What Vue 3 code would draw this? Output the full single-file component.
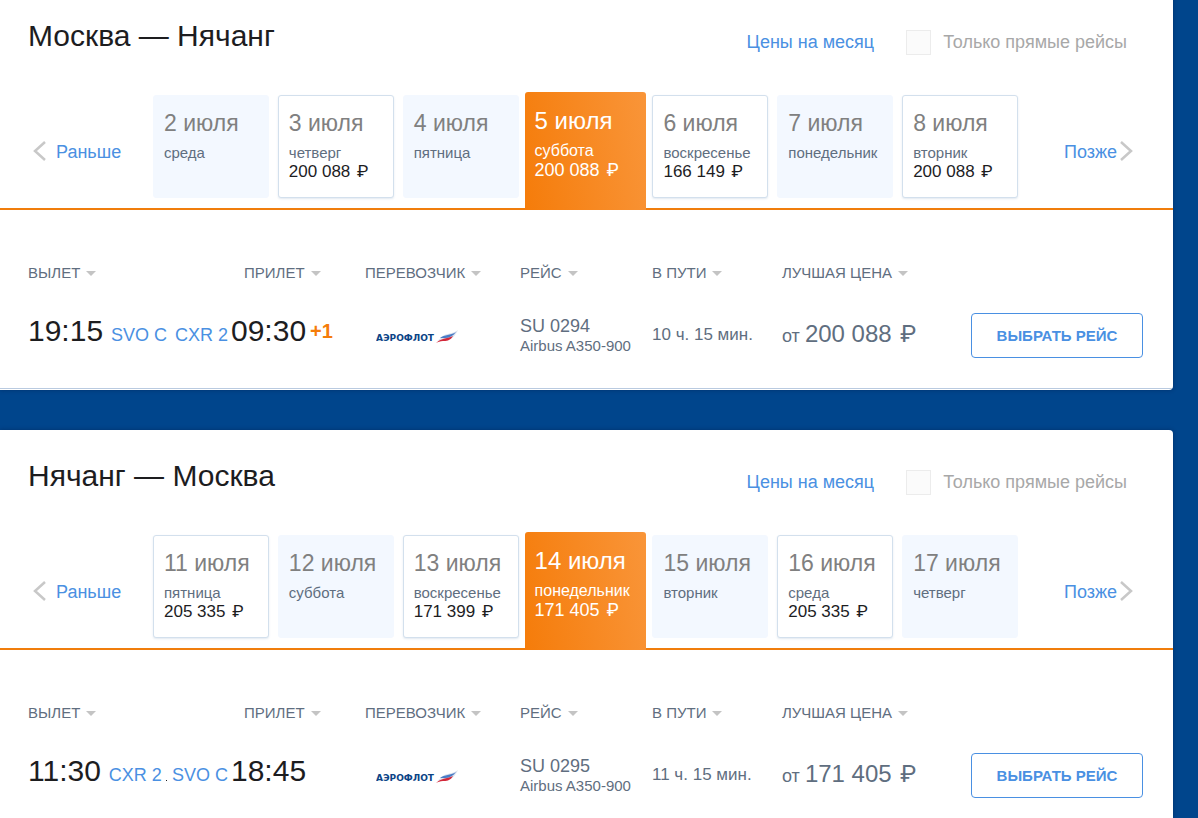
<script setup>
import { ref } from 'vue'

const columns = [
  { key: 'departure', label: 'ВЫЛЕТ' },
  { key: 'arrival', label: 'ПРИЛЕТ' },
  { key: 'carrier', label: 'ПЕРЕВОЗЧИК' },
  { key: 'flight', label: 'РЕЙС' },
  { key: 'duration', label: 'В ПУТИ' },
  { key: 'price', label: 'ЛУЧШАЯ ЦЕНА' },
]

const directions = ref([
  {
    id: 'outbound',
    title: 'Москва — Нячанг',
    directOnly: false,
    days: [
      { date: '2 июля', weekday: 'среда' },
      { date: '3 июля', weekday: 'четверг', price: '200 088' },
      { date: '4 июля', weekday: 'пятница' },
      { date: '5 июля', weekday: 'суббота', price: '200 088', active: true },
      { date: '6 июля', weekday: 'воскресенье', price: '166 149' },
      { date: '7 июля', weekday: 'понедельник' },
      { date: '8 июля', weekday: 'вторник', price: '200 088' },
    ],
    flight: {
      from: 'SVO C', departure: '19:15', to: 'CXR 2', arrival: '09:30', plusDays: '+1',
      number: 'SU 0294', aircraft: 'Airbus A350-900', duration: '10 ч. 15 мин.', price: '200 088',
    },
  },
  {
    id: 'inbound',
    title: 'Нячанг — Москва',
    directOnly: false,
    days: [
      { date: '11 июля', weekday: 'пятница', price: '205 335' },
      { date: '12 июля', weekday: 'суббота' },
      { date: '13 июля', weekday: 'воскресенье', price: '171 399' },
      { date: '14 июля', weekday: 'понедельник', price: '171 405', active: true },
      { date: '15 июля', weekday: 'вторник' },
      { date: '16 июля', weekday: 'среда', price: '205 335' },
      { date: '17 июля', weekday: 'четверг' },
    ],
    flight: {
      from: 'CXR 2', departure: '11:30', to: 'SVO C', arrival: '18:45', plusDays: '', dot: true,
      number: 'SU 0295', aircraft: 'Airbus A350-900', duration: '11 ч. 15 мин.', price: '171 405',
    },
  },
])
</script>

<template>
  <main class="page">
    <section v-for="dir in directions" :key="dir.id" class="panel">
      <header class="head">
        <h2 class="title">{{ dir.title }}</h2>
        <a class="link" href="#">Цены на месяц</a>
        <label class="direct" :for="'direct-' + dir.id">
          <input :id="'direct-' + dir.id" v-model="dir.directOnly" type="checkbox" class="check">
          Только прямые рейсы
        </label>
      </header>

      <nav class="strip">
        <button type="button" class="shift prev">
          <svg class="chevron" width="13" height="20" viewBox="0 0 13 20"><path d="M12 1 L2 10 L12 19" /></svg>
          <span>Раньше</span>
        </button>
        <div class="days">
          <button
            v-for="day in dir.days"
            :key="day.date"
            type="button"
            class="day"
            :class="{ priced: day.price, active: day.active }"
          >
            <span class="date">{{ day.date }}</span>
            <span class="weekday">{{ day.weekday }}</span>
            <span v-if="day.price" class="day-price">{{ day.price }} <span class="ruble">₽</span></span>
          </button>
        </div>
        <button type="button" class="shift next">
          <span>Позже</span>
          <svg class="chevron" width="13" height="20" viewBox="0 0 13 20"><path d="M1 1 L11 10 L1 19" /></svg>
        </button>
      </nav>

      <table class="flights">
        <colgroup>
          <col v-for="col in columns" :key="col.key" :class="'col-' + col.key">
          <col>
        </colgroup>
        <thead>
          <tr>
            <th v-for="col in columns" :key="col.key" scope="col" :class="'th-' + col.key">
              <button type="button" class="sort">{{ col.label }}<i class="caret"></i></button>
            </th>
            <td></td>
          </tr>
        </thead>
        <tbody>
          <tr>
            <td class="td-departure">
              <div class="point">
                <span class="time">{{ dir.flight.departure }}</span>
                <a class="link airport" href="#">{{ dir.flight.from }}</a>
                <i v-if="dir.flight.dot" class="dot"></i>
              </div>
            </td>
            <td>
              <div class="point">
                <a class="link airport to" href="#">{{ dir.flight.to }}</a>
                <span class="time">{{ dir.flight.arrival }}</span>
                <b v-if="dir.flight.plusDays" class="plus">{{ dir.flight.plusDays }}</b>
              </div>
            </td>
            <td class="td-carrier">
              <svg class="logo" width="84" height="16" viewBox="0 0 84 16" role="img" aria-label="Аэрофлот">
                <text x="0" y="12">АЭРОФЛОТ</text>
                <path d="M61 12 C65 10 65 6 72 5 C77 4 79 3 82 1 C79 7 76 11 70 11 C66 11 64 11 61 12 Z" fill="#dbe2ee" />
                <path d="M64 9 C69 5 74 7 80 3 C77 7 73 9 69 9 Z" fill="#4a7cc6" />
                <path d="M60 14 C65 9 70 10 77 7 C74 12 70 12 67 12 C64 12 62 13 60 14 Z" fill="#d3273a" />
              </svg>
            </td>
            <td>
              <div class="number">{{ dir.flight.number }}</div>
              <div class="aircraft">{{ dir.flight.aircraft }}</div>
            </td>
            <td class="duration">{{ dir.flight.duration }}</td>
            <td class="from-price">от <span class="sum">{{ dir.flight.price }} <span class="ruble">₽</span></span></td>
            <td class="action"><button type="button" class="select">ВЫБРАТЬ РЕЙС</button></td>
          </tr>
        </tbody>
      </table>
    </section>
  </main>
</template>

<style>
body {
  background: #00458c;
}
</style>

<style scoped>
.page {
  margin: -10px 25px 0 0;
  font-family: "Liberation Sans", Arial, sans-serif;
  font-size: 18px;
  color: #5f6e80;
}
.panel {
  box-sizing: border-box;
  padding-bottom: 13px;
  margin-bottom: 40px;
  background: linear-gradient(#b9cae0, #b9cae0) 0 calc(100% - 1px) / 100% 1px no-repeat #fff;
  border-radius: 0 4px 4px 0;
  box-shadow: 0 0 4px rgba(0, 20, 60, 0.4);
}
.panel:last-child {
  margin-bottom: 0;
  padding-bottom: 1px;
  background: #fff;
  border-radius: 0 4px 0 0;
}
button {
  margin: 0;
  padding: 0;
  border: 0;
  background: none;
  font: inherit;
  color: inherit;
  text-align: left;
  cursor: pointer;
}
.link {
  color: #4a90e2;
  text-decoration: none;
}
.head {
  display: flex;
  align-items: center;
  height: 104px;
  padding: 0 46px 0 28px;
}
.title {
  flex: 1;
  margin: 0 0 12px;
  font-size: 30px;
  line-height: 36px;
  font-weight: 400;
  color: #1d1d1f;
}
.direct {
  display: flex;
  align-items: center;
  gap: 12px;
  margin-left: 32px;
  color: #a8a8a8;
}
.check {
  appearance: none;
  box-sizing: border-box;
  width: 25px;
  height: 25px;
  margin: 0;
  border: 1px solid #ececec;
  background: #fbfbfb;
}
.strip {
  display: flex;
  align-items: flex-start;
  height: 114px;
  padding-left: 33px;
  border-bottom: 2px solid #f07d0c;
}
.shift {
  display: flex;
  align-items: center;
  margin-top: 44px;
  color: #4a90e2;
}
.shift span {
  margin-top: 4px;
}
.prev {
  width: 120px;
  gap: 10px;
}
.next {
  width: 155px;
  padding-left: 46px;
  gap: 3px;
}
.chevron {
  fill: none;
  stroke: #c8c8c8;
  stroke-width: 2.5;
}
.days {
  flex: 1;
  display: grid;
  grid-template-columns: repeat(7, 1fr);
  gap: 9px;
  height: 116px;
}
.day {
  display: flex;
  flex-direction: column;
  box-sizing: border-box;
  height: 103px;
  margin-top: 1px;
  padding: 13px 0 0 10px;
  border: 1px solid #f3f8ff;
  border-radius: 3px;
  background: #f3f8ff;
  white-space: nowrap;
}
.priced {
  border-color: #d3e0ed;
  background: #fff;
  box-shadow: 0 1px 2px rgba(60, 110, 160, 0.15);
}
.active {
  height: 118px;
  margin: -2px -3px 0;
  padding-top: 15px;
  border: 0;
  border-radius: 3px 3px 0 0;
  background: linear-gradient(80deg, #f57c0a, #f99539);
  box-shadow: none;
}
.date {
  font-size: 23px;
  line-height: 28px;
  color: #808080;
}
.weekday {
  margin-top: 7px;
  font-size: 15px;
  line-height: 18px;
}
.day-price {
  font-size: 17px;
  line-height: 18px;
  color: #1d1d1f;
}
.ruble {
  margin-left: 2px;
  font-family: Roboto, sans-serif;
}
.active .date,
.active .weekday,
.active .day-price {
  color: #fff;
}
.active .date {
  font-size: 24px;
}
.active .weekday {
  font-size: 16px;
}
.active .day-price {
  font-size: 18px;
  line-height: 20px;
}
.flights {
  width: 100%;
  table-layout: fixed;
  border-collapse: collapse;
}
.flights th,
.flights td {
  padding: 0;
  font-weight: 400;
  text-align: left;
  white-space: nowrap;
}
.flights thead tr {
  height: 83px;
}
.flights thead th {
  padding: 43px 0 0;
}
.flights tbody tr {
  height: 84px;
}
.flights tbody td {
  vertical-align: middle;
}
.col-departure {
  width: 168px;
}
.col-arrival {
  width: 197px;
}
.col-carrier {
  width: 155px;
}
.col-flight {
  width: 132px;
}
.col-duration {
  width: 130px;
}
.col-price {
  width: 160px;
}
.flights .th-departure,
.flights .td-departure {
  padding-left: 28px;
}
.flights .th-arrival {
  padding-left: 76px;
}
.sort {
  display: flex;
  align-items: center;
  gap: 6px;
  font-size: 15px;
  line-height: 18px;
}
.caret {
  border: 5px solid transparent;
  border-top-color: #c4c4c4;
  border-bottom: 0;
}
.point {
  display: flex;
  align-items: baseline;
  padding-bottom: 8px;
}
.time {
  font-size: 30px;
  line-height: 36px;
  color: #1d1d1f;
}
.airport {
  margin-left: 8px;
}
.to {
  width: 60px;
  margin: 0 3px 0 0;
  text-align: right;
}
.dot {
  width: 1px;
  height: 1px;
  margin: 0 0 6px 4px;
  background: #1d1d1f;
}
.plus {
  align-self: center;
  margin-left: 4px;
  font-size: 20px;
  color: #f57c0a;
}
.flights .td-carrier {
  padding: 4px 0 0 11px;
}
.logo {
  display: block;
}
.logo text {
  font: bold 9px "DejaVu Sans", sans-serif;
  fill: #0b4486;
}
.number {
  padding-top: 2px;
  line-height: 20px;
}
.aircraft {
  font-size: 15px;
  line-height: 20px;
}
.duration {
  font-size: 17px;
}
.flights .from-price {
  padding-bottom: 2px;
}
.sum {
  font-size: 24px;
}
.flights .action {
  padding-right: 30px;
  text-align: right;
}
.select {
  width: 172px;
  height: 45px;
  border: 1px solid #4a90e2;
  border-radius: 4px;
  font-size: 15px;
  font-weight: 700;
  color: #4a90e2;
  text-align: center;
}
</style>
